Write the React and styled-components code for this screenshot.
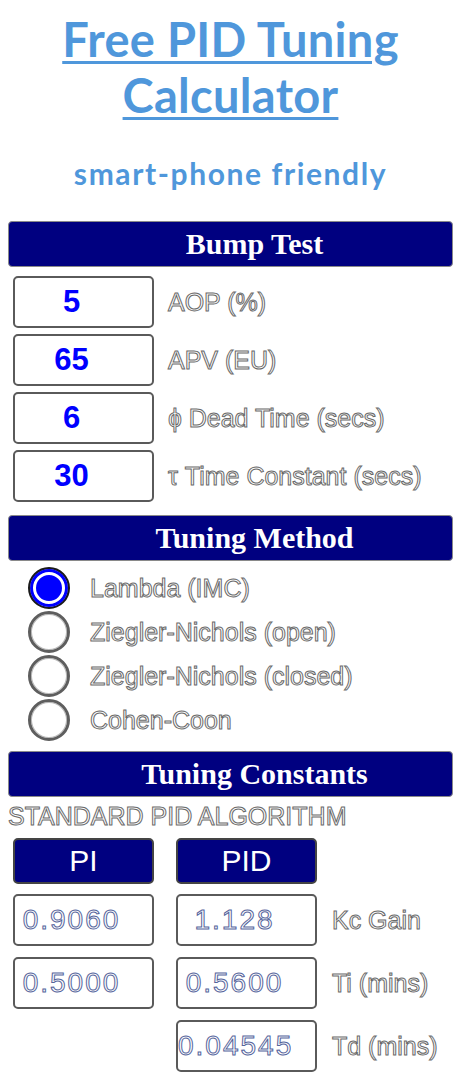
import React from 'react';
import styled, { createGlobalStyle } from 'styled-components';

var GlobalStyle = createGlobalStyle`
    html, body {
        margin: 0;
        padding: 0;
        background: #ffffff;
    }
    body {
        font-family: "Liberation Sans", Arial, sans-serif;
    }
`;

var Page = styled.div`
    width: 445px;
    padding: 11px 4px 8px 8px;
    display: flex;
    flex-direction: column;
`;

var Title = styled.h1`
    margin: 0;
    text-align: center;
    font-family: Lato, "DejaVu Sans", sans-serif;
    font-weight: 700;
    font-size: 47px;
    line-height: 56px;
    letter-spacing: 0.3px;
    color: #4f97db;

    a {
        color: inherit;
        text-decoration: underline;
        text-decoration-thickness: 3px;
        text-underline-offset: 4px;
    }
`;

var Subtitle = styled.p`
    margin: 32px 0 30px;
    text-align: center;
    font-family: Lato, "DejaVu Sans", sans-serif;
    font-weight: 700;
    font-size: 30px;
    line-height: 36px;
    letter-spacing: 1.6px;
    color: #4f97db;
`;

var Banner = styled.div`
    height: 44px;
    box-sizing: content-box;
    background: #000080;
    border: 1px solid #8a8a8a;
    border-radius: 4px;
    display: flex;
    align-items: center;
    justify-content: center;
    padding-left: 48px;
    font-family: "Liberation Serif", "Times New Roman", serif;
    font-weight: 700;
    font-size: 30px;
    color: #ffffff;
`;

var Hollow = styled.span`
    color: #ffffff;
    -webkit-text-stroke: 1px #6a6a6a;
    font-family: "Liberation Sans", Arial, sans-serif;
    font-size: 25px;
    white-space: nowrap;
`;

var Fields = styled.div`
    display: flex;
    flex-direction: column;
    gap: 6px;
    padding: 9px 0 13px 5px;
`;

var FieldRow = styled.label`
    display: flex;
    align-items: center;
    gap: 14px;
`;

var Box = styled.input`
    box-sizing: border-box;
    width: 141px;
    height: 52px;
    margin: 0;
    border: 2px solid #5a5a5a;
    border-radius: 5px;
    padding: 0 24px 0 0;
    background: #ffffff;
    text-align: center;
    font-family: "Liberation Sans", Arial, sans-serif;
    font-size: 31px;
    font-weight: 700;
    color: #0000ff;
    outline: none;

    &[readonly] {
        font-weight: 400;
        font-size: 28px;
        letter-spacing: 2px;
        color: #ffffff;
        -webkit-text-stroke: 1px #56659c;
    }
`;

var RadioList = styled.div`
    display: flex;
    flex-direction: column;
    gap: 2px;
    padding: 6px 0 10px 20px;
`;

var RadioRow = styled.label`
    display: flex;
    align-items: center;
    gap: 20px;
    height: 42px;
`;

var Dot = styled.span`
    box-sizing: border-box;
    width: 42px;
    height: 42px;
    border-radius: 50%;
    flex-shrink: 0;
    border: ${(p) => (p.$on ? '2px solid #1a1a1a' : '3px solid #5e5e5e')};
    background: ${(p) => (p.$on ? '#0000ff' : '#ffffff')};
    box-shadow: ${(p) =>
        p.$on
            ? 'inset 0 0 0 3px #0000ff, inset 0 0 0 6px #ffffff'
            : 'inset 0 0 0 1px #bbbbbb'};
`;

var Algorithm = styled.div`
    padding: 6px 0 5px 0;
    line-height: 26px;
`;

var Constants = styled.div`
    display: grid;
    grid-template-columns: 141px 141px auto;
    column-gap: 22px;
    row-gap: 11px;
    padding-left: 5px;
    align-items: center;

    & > :nth-child(3n) {
        margin-left: -7px;
    }
`;

var Tab = styled.div`
    box-sizing: border-box;
    height: 46px;
    margin-bottom: -1px;
    background: #000080;
    border: 2px solid #444444;
    border-radius: 5px;
    display: flex;
    align-items: center;
    justify-content: center;
    font-size: 30px;
    color: #ffffff;
`;

var Empty = styled.div``;

var bump = [
    { value: '5', label: 'AOP (%)' },
    { value: '65', label: 'APV (EU)' },
    { value: '6', label: 'ɸ Dead Time (secs)' },
    { value: '30', label: 'τ Time Constant (secs)' },
];

var methods = [
    'Lambda (IMC)',
    'Ziegler-Nichols (open)',
    'Ziegler-Nichols (closed)',
    'Cohen-Coon',
];

var results = [
    { pi: '0.9060', pid: '1.128', label: 'Kc Gain' },
    { pi: '0.5000', pid: '0.5600', label: 'Ti (mins)' },
    { pi: null, pid: '0.04545', label: 'Td (mins)' },
];

export default function App() {
    return (
        <Page>
            <GlobalStyle />
            <Title>
                <a href="#">Free PID Tuning</a>
                <br />
                <a href="#">Calculator</a>
            </Title>
            <Subtitle>smart-phone friendly</Subtitle>

            <Banner>Bump Test</Banner>
            <Fields>
                {bump.map((b) => (
                    <FieldRow key={b.label}>
                        <Box type="text" defaultValue={b.value} />
                        <Hollow>{b.label}</Hollow>
                    </FieldRow>
                ))}
            </Fields>

            <Banner>Tuning Method</Banner>
            <RadioList>
                {methods.map((m, i) => (
                    <RadioRow key={m}>
                        <Dot $on={i === 0} />
                        <Hollow>{m}</Hollow>
                    </RadioRow>
                ))}
            </RadioList>

            <Banner>Tuning Constants</Banner>
            <Algorithm>
                <Hollow>STANDARD PID ALGORITHM</Hollow>
            </Algorithm>
            <Constants>
                <Tab>PI</Tab>
                <Tab>PID</Tab>
                <Empty />
                {results.map((r) => (
                    <React.Fragment key={r.label}>
                        {r.pi ? <Box readOnly value={r.pi} /> : <Empty />}
                        <Box readOnly value={r.pid} />
                        <Hollow>{r.label}</Hollow>
                    </React.Fragment>
                ))}
            </Constants>
        </Page>
    );
}
